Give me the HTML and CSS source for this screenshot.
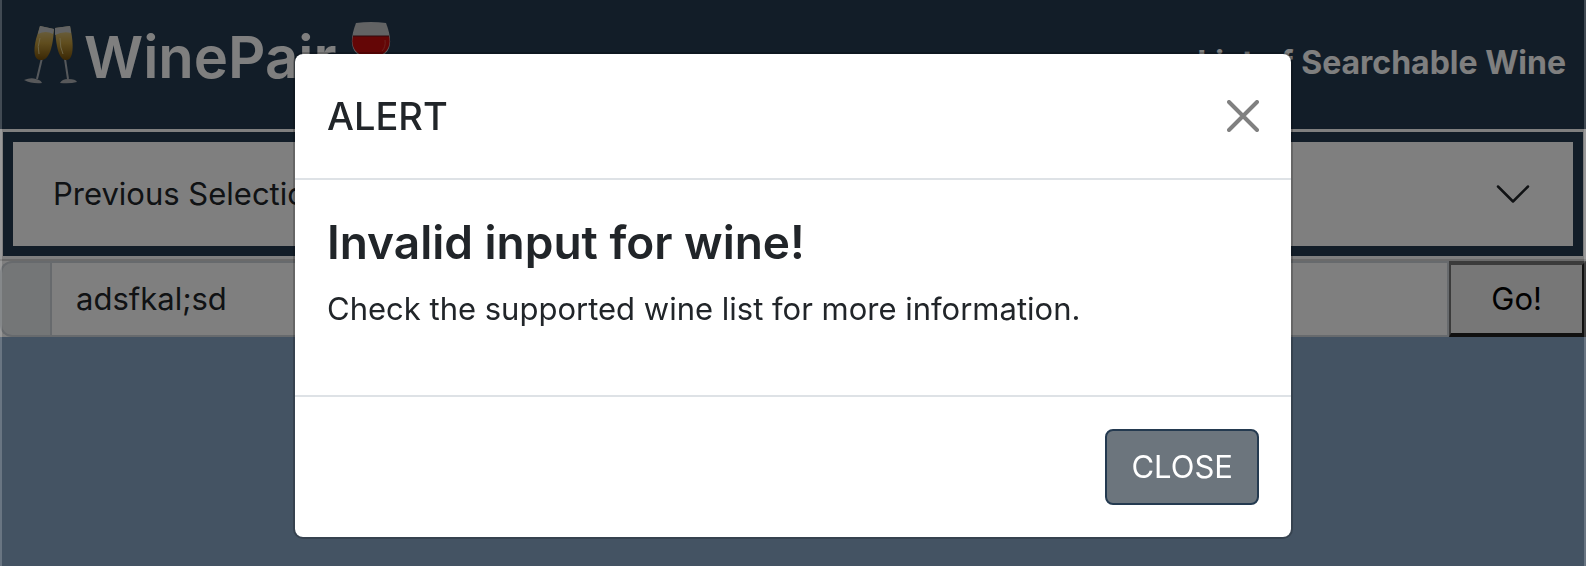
FILE: index.html
```html
<!DOCTYPE html>
<html lang="en">
<head>
<meta charset="utf-8">
<meta name="viewport" content="width=device-width, initial-scale=1">
<title>WinePair</title>
<link rel="stylesheet" href="styles.css">
</head>
<body>
<header class="site-header">
  <h1 class="brand">
    <svg class="brand-flutes" viewBox="0 0 54 60" aria-hidden="true">
      <defs>
        <linearGradient id="champagne" x1="0" y1="0" x2="0" y2="1">
          <stop offset="0" stop-color="#d9c992"/>
          <stop offset=".5" stop-color="#c09a3c"/>
          <stop offset="1" stop-color="#76500a"/>
        </linearGradient>
      </defs>
      <path d="M18 33 13 54" stroke="#aab0b6" stroke-width="2"/>
      <path d="M0 55q7-3 12-1 5 1 6 4Q8 59 0 55Z" fill="#aeb1b5"/>
      <path d="M16 1 30 4C29 20 26 34 18 35 10 36 9 27 12 14Z" fill="url(#champagne)"/>
      <path d="M16 1 30 4 29 9Q22 5 14 9Z" fill="#c4c7c9"/>
      <path d="M16 13Q13 22 15 29" fill="none" stroke="#dccb8c" stroke-width="1"/>
      <path d="M41 34 44 54" stroke="#aab0b6" stroke-width="2"/>
      <path d="M36 58q2-4 8-4 8 0 9 3-7 2-17 1Z" fill="#aeb1b5"/>
      <path d="M31 3 46 1C49 14 51 34 43 35 35 36 32 22 31 3Z" fill="url(#champagne)"/>
      <path d="M31 3 46 1 47 8Q39 6 31 10Z" fill="#c4c7c9"/>
      <path d="M36 13Q36 23 39 29" fill="none" stroke="#dccb8c" stroke-width="1"/>
    </svg>
    <span>WinePair</span>
    <svg class="brand-glass" viewBox="0 0 40 62" aria-hidden="true">
      <path d="M5 1Q20-1 35 1C43 22 40 35 20 36 0 35-3 22 5 1Z" fill="#c4c6c8"/>
      <path d="M2 14H38C41 26 34 35 20 35S-1 26 2 14Z" fill="#c80c0c"/>
      <path d="M2 14H38" stroke="#5e171c" stroke-width="1"/>
      <path d="M34 18Q35 25 31 29" fill="none" stroke="#d8453e" stroke-width="1"/>
      <path d="M20 35V58M8 59H32" stroke="#a3a5a7" stroke-width="3"/>
    </svg>
  </h1>
  <a class="wine-link" href="#wines">List of Searchable Wine</a>
</header>
<main>
  <section class="accordion">
    <button class="accordion-button" type="button" aria-expanded="false">
      <span>Previous Selections</span>
      <svg class="chevron" viewBox="0 0 16 16" aria-hidden="true"><path d="m2 5 6 6 6-6" fill="none" stroke="#212529" stroke-linecap="round" stroke-linejoin="round"/></svg>
    </button>
  </section>
  <form class="search">
    <span class="search-prefix"></span>
    <input class="search-input" type="text" value="adsfkal;sd" aria-label="Wine">
    <button class="search-go" type="button">Go!</button>
  </form>
</main>
<div class="backdrop">
  <div class="modal" role="dialog" aria-modal="true" aria-labelledby="alert-title">
    <div class="modal-header">
      <h2 class="modal-title" id="alert-title">ALERT</h2>
      <button class="modal-x" type="button" aria-label="Dismiss">
        <svg viewBox="0 0 16 16" aria-hidden="true"><path d="M1 1 15 15M15 1 1 15" fill="none" stroke="#808080" stroke-width="2" stroke-linecap="round"/></svg>
      </button>
    </div>
    <div class="modal-body">
      <h3 class="modal-heading">Invalid input for wine!</h3>
      <p class="modal-text">Check the supported wine list for more information.</p>
    </div>
    <div class="modal-footer">
      <button class="modal-close" type="button">CLOSE</button>
    </div>
  </div>
</div>
</body>
</html>
```

FILE: styles.css
```css
* { box-sizing: border-box; }

body {
  margin: 0;
  min-height: 100vh;
  background: #88a6c6;
  color: #212529;
  font: 400 31px/48px Inter, "Liberation Sans", sans-serif;
}

h1, h2, h3, p { margin: 0; }
button, input { font: inherit; color: inherit; }

.site-header {
  display: flex;
  justify-content: space-between;
  align-items: flex-start;
  padding: 22px 20px 27px 24px;
  background: #243a50;
  color: #fff;
}

.brand {
  display: flex;
  align-items: flex-start;
  height: 80px;
  font-size: 58px;
  font-weight: 600;
  line-height: 70px;
}

.brand-flutes { width: 54px; height: 60px; margin: 3px 6px 0 0; }
.brand-glass { width: 40px; height: 62px; margin-left: 14px; }

.wine-link {
  padding-top: 17px;
  color: inherit;
  font-size: 32px;
  font-weight: 700;
  text-decoration: none;
}

.accordion {
  padding: 10px;
  border: 3px solid #fff;
  background: #243a50;
  background-clip: padding-box;
}

.accordion-button {
  display: flex;
  justify-content: space-between;
  align-items: center;
  width: 100%;
  padding: 28px 40px;
  border: 0;
  background: #fff;
  text-align: left;
}

.chevron { width: 40px; height: 40px; }

.search {
  display: flex;
  border-top: 2px solid #d4d4d4;
  background: #fff;
}

.search-prefix {
  width: 50px;
  border: 2px solid #ced4da;
  border-right: 0;
  border-radius: 12px 0 0 12px;
  background: #e9ecef;
}

.search-input {
  flex: 1;
  min-width: 0;
  padding: 12px 24px;
  border: 2px solid #ced4da;
  border-radius: 0;
  background: #fff;
}

.search-go {
  padding: 10px 40px;
  border: solid;
  border-width: 4px 4px 4px 2px;
  border-color: #767676 #212121 #212121 #767676;
  background: #efefef;
  color: #000;
}

.backdrop {
  position: fixed;
  inset: 0;
  padding: 52px 24px 0;
  border: solid rgba(255, 255, 255, .2);
  border-width: 0 2px;
  background: rgba(0, 0, 0, .5);
}

.modal {
  max-width: 1000px;
  margin: 0 auto;
  border: 2px solid rgba(0, 0, 0, .2);
  border-radius: 10px;
  background: #fff;
  background-clip: padding-box;
}

.modal-header {
  display: flex;
  justify-content: space-between;
  align-items: center;
  padding: 32px;
  border-bottom: 2px solid #dee2e6;
}

.modal-title { font-size: 38px; font-weight: 500; line-height: 60px; }

.modal-x {
  width: 32px;
  height: 32px;
  padding: 0;
  border: 0;
  background: transparent;
}

.modal-x svg { display: block; }

.modal-body { padding: 32px; }
.modal-heading { margin-bottom: 12px; font-size: 46px; font-weight: 600; line-height: 61px; }
.modal-text { margin-bottom: 30px; }

.modal-footer {
  display: flex;
  justify-content: flex-end;
  padding: 32px;
  border-top: 2px solid #dee2e6;
}

.modal-close {
  padding: 12px 24px;
  border: 2px solid #243a50;
  border-radius: 8px;
  background: #6c757d;
  color: #fff;
}
```
